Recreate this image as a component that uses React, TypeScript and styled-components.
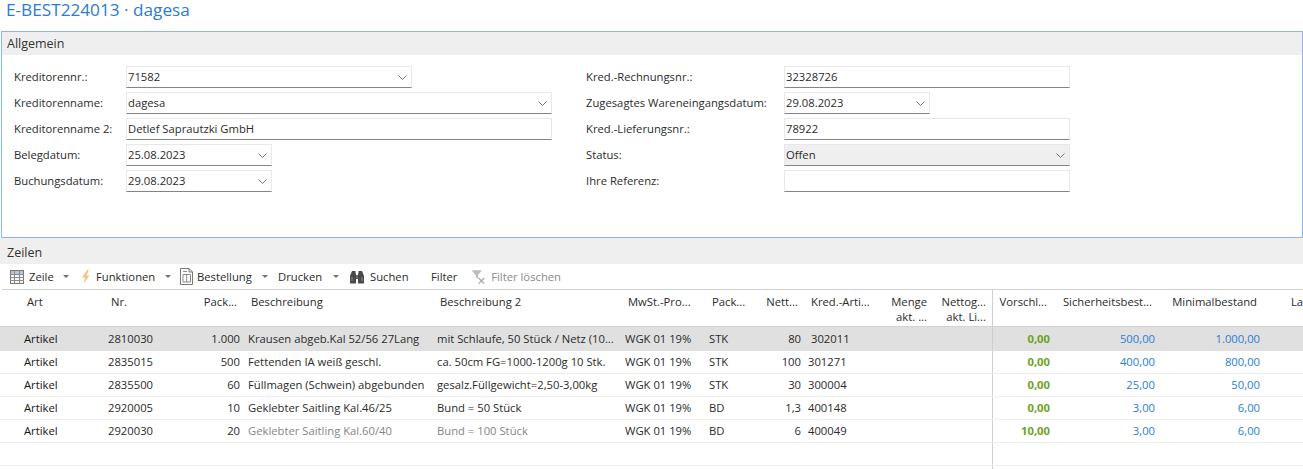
import React from 'react'
import styled, { createGlobalStyle } from 'styled-components'

const FONT = `"Open Sans", "Noto Sans", sans-serif`

const GlobalStyle = createGlobalStyle`
  html, body {
    margin: 0;
    padding: 0;
    width: 1303px;
    height: 469px;
    overflow: hidden;
    background: #fff;
  }
  body {
    font-family: ${FONT};
    font-size: 11.25px;
    color: #2b2b2b;
  }
`

interface Column {
  width: number
  right?: boolean
  headPad: number
}

const columns: Column[] = [
  { width: 100, headPad: 27 },
  { width: 90, headPad: 11 },
  { width: 55, right: true, headPad: 8 },
  { width: 189, headPad: 6 },
  { width: 188, headPad: 6 },
  { width: 84, headPad: 6 },
  { width: 56, headPad: 6 },
  { width: 44, right: true, headPad: 8 },
  { width: 74, headPad: 5 },
  { width: 52, right: true, headPad: 5 },
  { width: 60, right: true, headPad: 6 },
  { width: 63, right: true, headPad: 8 },
  { width: 105, right: true, headPad: 8 },
  { width: 105, right: true, headPad: 8 },
  { width: 38, headPad: 26 },
]

const gridTemplate = columns.map(c => `${c.width}px`).join(' ')

const headers = [
  'Art',
  'Nr.',
  'Pack...',
  'Beschreibung',
  'Beschreibung 2',
  'MwSt.-Pro...',
  'Pack...',
  'Nett...',
  'Kred.-Arti...',
  'Menge\nakt. ...',
  'Nettog...\nakt. Li...',
  'Vorschl...',
  'Sicherheitsbest...',
  'Minimalbestand',
  'La',
]

interface RowData {
  nr: string
  pack: string
  desc: string
  desc2: string
  unit: string
  net: string
  kred: string
  proposal: string
  safety: string
  minimum: string
  muted?: boolean
  selected?: boolean
}

const rows: RowData[] = [
  { nr: '2810030', pack: '1.000', desc: 'Krausen abgeb.Kal 52/56 27Lang', desc2: 'mit Schlaufe, 50 Stück / Netz (10...', unit: 'STK', net: '80', kred: '302011', proposal: '0,00', safety: '500,00', minimum: '1.000,00', selected: true },
  { nr: '2835015', pack: '500', desc: 'Fettenden IA weiß geschl.', desc2: 'ca. 50cm FG=1000-1200g 10 Stk.', unit: 'STK', net: '100', kred: '301271', proposal: '0,00', safety: '400,00', minimum: '800,00' },
  { nr: '2835500', pack: '60', desc: 'Füllmagen (Schwein) abgebunden', desc2: 'gesalz.Füllgewicht=2,50-3,00kg', unit: 'STK', net: '30', kred: '300004', proposal: '0,00', safety: '25,00', minimum: '50,00' },
  { nr: '2920005', pack: '10', desc: 'Geklebter Saitling Kal.46/25', desc2: 'Bund = 50 Stück', unit: 'BD', net: '1,3', kred: '400148', proposal: '0,00', safety: '3,00', minimum: '6,00' },
  { nr: '2920030', pack: '20', desc: 'Geklebter Saitling Kal.60/40', desc2: 'Bund = 100 Stück', unit: 'BD', net: '6', kred: '400049', proposal: '10,00', safety: '3,00', minimum: '6,00', muted: true },
]

const Chevron = () => (
  <ChevronIcon width="9" height="5" viewBox="0 0 9 5">
    <polyline points="0.5,0.5 4.5,4.5 8.5,0.5" fill="none" stroke="#777" strokeWidth="1" />
  </ChevronIcon>
)

const GridIcon = () => (
  <svg width="14" height="14" viewBox="0 0 14 14">
    <rect x="0.5" y="0.5" width="13" height="13" fill="#f4f4f4" stroke="#777" />
    <rect x="1" y="1" width="12" height="3" fill="#b9c6d8" />
    <path d="M0 4.5h14M0 7.5h14M0 10.5h14M4.5 0v14M9.5 0v14" stroke="#8a8a8a" strokeWidth="1" />
  </svg>
)

const FlashIcon = () => (
  <svg width="10" height="16" viewBox="0 0 10 16">
    <path d="M6.5 0.5 L1 8.5 H4 L2 15 L8.5 6.5 H5.5 L8 0.5 Z" fill="#f3c488" />
  </svg>
)

const DocIcon = () => (
  <svg width="13" height="17" viewBox="0 0 13 17">
    <path d="M0.5 0.5H9L12.5 4V16.5H0.5Z" fill="#fff" stroke="#777" />
    <path d="M9 0.5V4H12.5" fill="none" stroke="#777" />
    <path d="M3 6.5H10.5V14H3ZM6.7 6.5V14" fill="none" stroke="#8a8a8a" />
    <path d="M3 3.5H7" stroke="#8a8a8a" />
  </svg>
)

const BinocularsIcon = () => (
  <svg width="16" height="14" viewBox="0 0 16 14">
    <path d="M3 1H6.5V3.5H7V13.5H1V9L1 6Z" fill="#4a4a4a" />
    <path d="M13 1H9.5V3.5H9V13.5H15V9L15 6Z" fill="#4a4a4a" />
    <rect x="7" y="5" width="2" height="4" fill="#6a6a6a" />
    <path d="M3 7V11M13 7V11" stroke="#8f8f8f" />
  </svg>
)

const FilterClearIcon = () => (
  <svg width="16" height="16" viewBox="0 0 16 16">
    <path d="M0.5 1H11.5L7.5 6V10L5 8V6Z" fill="#bdbdbd" />
    <path d="M8 9L14 15M14 9L8 15" stroke="#a8a8a8" strokeWidth="1.4" />
  </svg>
)

const Caret = ({ offset }: { offset: number }) => (
  <CaretIcon $offset={offset} width="6" height="3" viewBox="0 0 6 3">
    <path d="M0 0H6L3 3Z" fill="#707070" />
  </CaretIcon>
)

export default function App() {
  return (
    <Page>
      <GlobalStyle />
      <PageTitle>E-BEST224013 · dagesa</PageTitle>

      <Panel>
        <SectionBand>Allgemein</SectionBand>
        <FormBody>
          <FormColumn $labelWidth={112} $width={572}>
            <FieldRow>
              <FieldLabel>Kreditorennr.:</FieldLabel>
              <Field $width={286}>71582<Chevron /></Field>
            </FieldRow>
            <FieldRow>
              <FieldLabel>Kreditorenname:</FieldLabel>
              <Field $width={426}>dagesa<Chevron /></Field>
            </FieldRow>
            <FieldRow>
              <FieldLabel>Kreditorenname 2:</FieldLabel>
              <Field $width={426}>Detlef Saprautzki GmbH</Field>
            </FieldRow>
            <FieldRow>
              <FieldLabel>Belegdatum:</FieldLabel>
              <Field $width={146}>25.08.2023<Chevron /></Field>
            </FieldRow>
            <FieldRow>
              <FieldLabel>Buchungsdatum:</FieldLabel>
              <Field $width={146}>29.08.2023<Chevron /></Field>
            </FieldRow>
          </FormColumn>
          <FormColumn $labelWidth={198} $width={484}>
            <FieldRow>
              <FieldLabel>Kred.-Rechnungsnr.:</FieldLabel>
              <Field $width={286}>32328726</Field>
            </FieldRow>
            <FieldRow>
              <FieldLabel>Zugesagtes Wareneingangsdatum:</FieldLabel>
              <Field $width={146}>29.08.2023<Chevron /></Field>
            </FieldRow>
            <FieldRow>
              <FieldLabel>Kred.-Lieferungsnr.:</FieldLabel>
              <Field $width={286}>78922</Field>
            </FieldRow>
            <FieldRow>
              <FieldLabel>Status:</FieldLabel>
              <Field $width={286} $readOnly>Offen<Chevron /></Field>
            </FieldRow>
            <FieldRow>
              <FieldLabel>Ihre Referenz:</FieldLabel>
              <Field $width={286} />
            </FieldRow>
          </FormColumn>
        </FormBody>
      </Panel>

      <LinesBand>Zeilen</LinesBand>

      <Toolbar>
        <ToolButton $width={71} $gap={5}><GridIcon />Zeile<Caret offset={4} /></ToolButton>
        <ToolButton $width={99} $gap={5}><FlashIcon />Funktionen<Caret offset={5} /></ToolButton>
        <ToolButton $width={98} $gap={4}><DocIcon />Bestellung<Caret offset={6} /></ToolButton>
        <ToolButton $width={71} $gap={6}>Drucken<Caret offset={5} /></ToolButton>
        <ToolButton $width={82} $gap={5}><BinocularsIcon />Suchen</ToolButton>
        <ToolButton $width={40} $gap={0}>Filter</ToolButton>
        <ToolButton $width={90} $gap={5} $disabled><FilterClearIcon />Filter löschen</ToolButton>
      </Toolbar>

      <Table>
        <HeaderRow>
          {headers.map((text, i) => (
            <HeaderCell key={i} $right={columns[i].right} $pad={columns[i].headPad} $divider={i === 11}>
              {text}
            </HeaderCell>
          ))}
        </HeaderRow>
        {rows.map(row => (
          <DataRow key={row.nr} $selected={row.selected}>
            <Cell $pad={24} $strong>Artikel</Cell>
            <Cell $pad={8}>{row.nr}</Cell>
            <Cell $pad={5} $right>{row.pack}</Cell>
            <Cell $pad={3} $muted={row.muted}>{row.desc}</Cell>
            <Cell $pad={3} $muted={row.muted}>{row.desc2}</Cell>
            <Cell $pad={3}>WGK 01 19%</Cell>
            <Cell $pad={3}>{row.unit}</Cell>
            <Cell $pad={5} $right>{row.net}</Cell>
            <Cell $pad={row.selected ? 5 : 2}>{row.kred}</Cell>
            <Cell $pad={5} />
            <Cell $pad={5} />
            <Cell $pad={5} $right $divider $tone="green">{row.proposal}</Cell>
            <Cell $pad={5} $right $tone="blue">{row.safety}</Cell>
            <Cell $pad={5} $right $tone="blue">{row.minimum}</Cell>
            <Cell $pad={5} />
          </DataRow>
        ))}
        <EmptyRow>
          {columns.map((_, i) => <Cell key={i} $pad={0} $divider={i === 11} />)}
        </EmptyRow>
        <TableTail />
      </Table>
    </Page>
  )
}

const Page = styled.div`
  width: 1303px;
  height: 469px;
  overflow: hidden;
`

const PageTitle = styled.div`
  height: 31px;
  padding-left: 6px;
  font-size: 17.2px;
  line-height: 20px;
  color: #2b7cd3;
`

const Panel = styled.section`
  height: 207px;
  margin-left: 1px;
  border: 1px solid #8db7ec;
  box-sizing: border-box;
`

const SectionBand = styled.div`
  height: 23px;
  padding-left: 5px;
  background: #efefef;
  font-size: 12.5px;
  line-height: 24px;
  color: #333;
`

const LinesBand = styled(SectionBand)`
  height: 26px;
  padding-left: 7px;
  line-height: 29px;
`

const FormBody = styled.div`
  display: flex;
  padding: 11px 0 0 12px;
`

const FormColumn = styled.div<{ $labelWidth: number; $width: number }>`
  display: flex;
  flex-direction: column;
  gap: 4px;
  width: ${props => props.$width}px;
  --label-width: ${props => props.$labelWidth}px;
`

const FieldRow = styled.div`
  display: flex;
  align-items: center;
  height: 22px;
`

const FieldLabel = styled.label`
  flex: none;
  width: var(--label-width);
  padding-bottom: 2px;
  white-space: nowrap;
`

const Field = styled.div<{ $width: number; $readOnly?: boolean }>`
  display: flex;
  align-items: center;
  justify-content: space-between;
  box-sizing: border-box;
  width: ${props => props.$width}px;
  height: 22px;
  padding: 0 4px 2px 1px;
  background: ${props => (props.$readOnly ? '#efefef' : '#fff')};
  border: 1px solid #e8e8e8;
  border-bottom: 1px solid #848484;
`

const ChevronIcon = styled.svg`
  flex: none;
  margin-top: 2px;
`

const Toolbar = styled.div`
  display: flex;
  align-items: center;
  box-sizing: border-box;
  height: 26px;
  margin-left: 2px;
  padding-left: 8px;
  border-bottom: 1px solid #d2d2d2;
`

const ToolButton = styled.div<{ $width: number; $gap: number; $disabled?: boolean }>`
  display: flex;
  flex: none;
  align-items: center;
  gap: ${props => props.$gap}px;
  width: ${props => props.$width}px;
  white-space: nowrap;
  color: ${props => (props.$disabled ? '#8a8a8a' : '#2b2b2b')};
`

const CaretIcon = styled.svg<{ $offset: number }>`
  flex: none;
  margin-left: ${props => props.$offset}px;
`

const Table = styled.div`
  width: 1303px;
`

const HeaderRow = styled.div`
  display: grid;
  grid-template-columns: ${gridTemplate};
  height: 37px;
  border-bottom: 1px solid #d2d2d2;
  box-sizing: border-box;
`

const DataRow = styled.div<{ $selected?: boolean }>`
  display: grid;
  grid-template-columns: ${gridTemplate};
  align-items: stretch;
  height: ${props => (props.$selected ? 24 : 23)}px;
  line-height: ${props => (props.$selected ? 23 : 21)}px;
  background: ${props => (props.$selected ? '#e0e0e0' : '#fff')};
  border-bottom: 1px solid ${props => (props.$selected ? '#e0e0e0' : '#eeeeee')};
  box-sizing: border-box;
`

const EmptyRow = styled(DataRow)``

const TableTail = styled.div`
  height: 3px;
  margin-left: 992px;
  border-left: 1px solid #cfcfcf;
`

const HeaderCell = styled.div<{ $right?: boolean; $pad: number; $divider?: boolean }>`
  box-sizing: border-box;
  padding: 4px ${props => (props.$right ? `${props.$pad}px` : '0')} 0 ${props => (props.$right ? '0' : `${props.$pad}px`)};
  line-height: 15px;
  white-space: pre;
  text-align: ${props => (props.$right ? 'right' : 'left')};
  border-left: ${props => (props.$divider ? '1px solid #cfcfcf' : 'none')};
`

const toneColors = { green: '#6ca323', blue: '#2a7ed3' }

const Cell = styled.div<{
  $right?: boolean
  $pad: number
  $strong?: boolean
  $muted?: boolean
  $divider?: boolean
  $tone?: 'green' | 'blue'
}>`
  box-sizing: border-box;
  padding: 0 ${props => (props.$right ? `${props.$pad}px` : '0')} 0 ${props => (props.$right ? '0' : `${props.$pad}px`)};
  white-space: nowrap;
  overflow: hidden;
  text-align: ${props => (props.$right ? 'right' : 'left')};
  font-weight: ${props => (props.$tone === 'green' ? 700 : 400)};
  color: ${props => {
    if (props.$muted) return '#858585'
    if (props.$tone) return toneColors[props.$tone]
    return props.$strong ? '#151515' : '#2b2b2b'
  }};
  border-left: ${props => (props.$divider ? '1px solid #cfcfcf' : 'none')};
`
